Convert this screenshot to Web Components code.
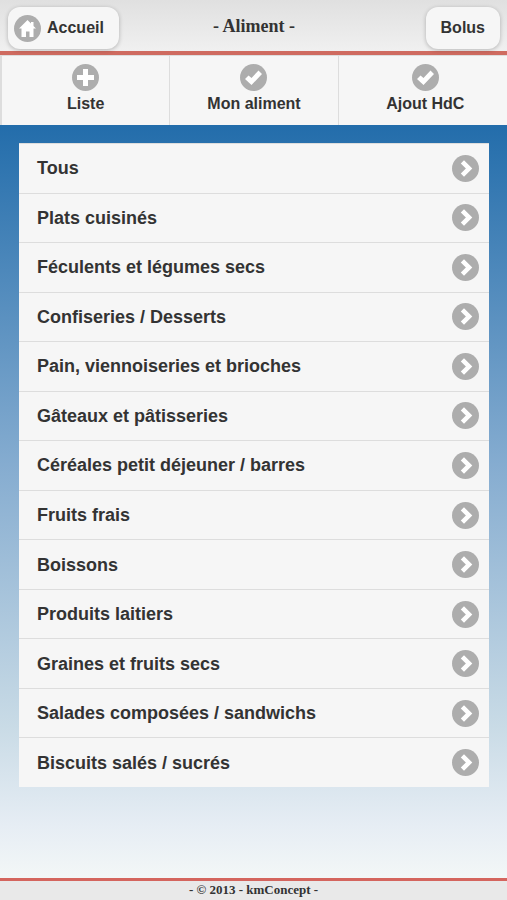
<!DOCTYPE html>
<html lang="fr">
<head>
  <meta charset="utf-8">
  <meta name="viewport" content="width=device-width, initial-scale=1">
  <title>Aliment</title>
  <style>
    body {
      margin: 0;
      color: #333;
      font-family: "Liberation Sans", Arial, sans-serif;
      font-weight: bold;
    }
  </style>
</head>
<body>
  <km-page>
    <km-header slot="header">
      <km-button slot="left" icon="home">Accueil</km-button>
      - Aliment -
      <km-button slot="right">Bolus</km-button>
    </km-header>
    <km-navbar slot="header">
      <km-tab icon="plus">Liste</km-tab>
      <km-tab icon="check">Mon aliment</km-tab>
      <km-tab icon="check">Ajout HdC</km-tab>
    </km-navbar>
    <km-list>
      <km-item>Tous</km-item>
      <km-item>Plats cuisinés</km-item>
      <km-item>Féculents et légumes secs</km-item>
      <km-item>Confiseries / Desserts</km-item>
      <km-item>Pain, viennoiseries et brioches</km-item>
      <km-item>Gâteaux et pâtisseries</km-item>
      <km-item>Céréales petit déjeuner / barres</km-item>
      <km-item>Fruits frais</km-item>
      <km-item>Boissons</km-item>
      <km-item>Produits laitiers</km-item>
      <km-item>Graines et fruits secs</km-item>
      <km-item>Salades composées / sandwichs</km-item>
      <km-item>Biscuits salés / sucrés</km-item>
    </km-list>
    <km-footer slot="footer">- © 2013 - kmConcept -</km-footer>
  </km-page>

  <script>
    const icons = {
      home: '<path d="M13.5 5 L5 13.5 H7.5 V22 H12 V16.5 H15.5 V22 H19.5 V13.5 H22 L19.5 11 V7 H17 V8.5 Z"/>',
      plus: '<path d="M11 5 H16 V11 H22 V16 H16 V22 H11 V16 H5 V11 H11 Z"/>',
      check: '<path d="M5 15 L8.5 11.5 L11.5 14 L18.5 6.5 L22 10 L11.5 21 Z"/>',
      arrow: '<path d="M8.8 8.4 L12 5.2 L20.3 13.5 L12 21.8 L8.8 18.6 L13.9 13.5 Z"/>'
    };

    function createTemplate(html) {
      const template = document.createElement("template");
      template.innerHTML = html;
      return template;
    }

    class BaseElement extends HTMLElement {
      constructor() {
        super();
        this.attachShadow({ mode: "open" });
      }

      connectedCallback() {
        this.shadowRoot.replaceChildren(this.constructor.template.content.cloneNode(true));
        this.render();
      }

      render() {}
    }

    class Icon extends BaseElement {
      static template = createTemplate(`
        <style>
          :host {
            display: block;
            flex: none;
            width: 27px;
            height: 27px;
          }
          svg {
            display: block;
            width: 100%;
            height: 100%;
          }
        </style>
        <svg viewBox="0 0 27 27" aria-hidden="true">
          <circle cx="13.5" cy="13.5" r="13.5" fill="#adadad"/>
          <g fill="#fff"></g>
        </svg>
      `);

      render() {
        this.shadowRoot.querySelector("g").innerHTML = icons[this.getAttribute("name")];
      }
    }

    class Page extends BaseElement {
      static template = createTemplate(`
        <style>
          :host {
            display: flex;
            flex-direction: column;
            min-height: 100vh;
          }
          main {
            display: flex;
            flex: 1;
            padding: 18px 18px 91px 19px;
            background: linear-gradient(#236dab, #85acd0 45%, #c9dbe6 80%, #e6edf4 93%, #f3f7f7);
          }
        </style>
        <slot name="header"></slot>
        <main><slot></slot></main>
        <slot name="footer"></slot>
      `);
    }

    class Header extends BaseElement {
      static template = createTemplate(`
        <style>
          :host {
            display: block;
            border-bottom: 4px solid #cf6b60;
            background: linear-gradient(#e0e0e0, #f0f0f0);
          }
          header {
            display: grid;
            grid-template-columns: 1fr auto 1fr;
            align-items: start;
            padding: 7px 7px 2px 8px;
          }
          h1 {
            margin: 0;
            padding-top: 8px;
            font: bold 18px/22px "Liberation Serif", "Times New Roman", serif;
          }
          slot[name="left"] {
            display: flex;
          }
          slot[name="right"] {
            display: flex;
            justify-content: flex-end;
          }
        </style>
        <header>
          <slot name="left"></slot>
          <h1><slot></slot></h1>
          <slot name="right"></slot>
        </header>
      `);
    }

    class Button extends BaseElement {
      static template = createTemplate(`
        <style>
          :host {
            display: block;
          }
          button {
            display: flex;
            align-items: center;
            gap: 6px;
            height: 42px;
            margin: 0;
            padding: 0 15px;
            border: 0;
            border-radius: 12px;
            background: #f6f6f6;
            box-shadow: 0 1px 4px rgba(0, 0, 0, .25);
            color: inherit;
            font: inherit;
            font-size: 16px;
            line-height: 20px;
          }
          :host([icon]) button {
            padding-left: 6px;
          }
        </style>
        <button type="button"><slot></slot></button>
      `);

      render() {
        if (!this.hasAttribute("icon")) return;
        const icon = document.createElement("km-icon");
        icon.setAttribute("name", this.getAttribute("icon"));
        this.shadowRoot.querySelector("button").prepend(icon);
      }
    }

    class Navbar extends BaseElement {
      static template = createTemplate(`
        <style>
          :host {
            display: block;
            border-top: 1px solid #ddd;
            border-left: 2px solid #ddd;
            background: #f6f6f6;
          }
          nav {
            display: grid;
            grid-template-columns: repeat(3, 1fr);
          }
          ::slotted(:last-child) {
            border-right: 0;
            padding-left: 5px;
          }
        </style>
        <nav><slot></slot></nav>
      `);
    }

    class Tab extends BaseElement {
      static template = createTemplate(`
        <style>
          :host {
            display: block;
            border-right: 1px solid #ddd;
          }
          a {
            display: flex;
            flex-direction: column;
            align-items: center;
            gap: 3px;
            padding: 8px 0 11px;
            color: inherit;
            font-size: 16px;
            line-height: 20px;
            text-decoration: none;
          }
        </style>
        <a href="#"><km-icon></km-icon><slot></slot></a>
      `);

      render() {
        const icon = this.shadowRoot.querySelector("km-icon");
        icon.setAttribute("name", this.getAttribute("icon"));
        if (icon.render) icon.render();
      }
    }

    class List extends BaseElement {
      static template = createTemplate(`
        <style>
          :host {
            display: grid;
            flex: 1;
            grid-auto-rows: 1fr;
            background: #f6f6f6;
          }
          ::slotted(*) {
            border-top: 1px solid #ddd;
          }
        </style>
        <slot></slot>
      `);

      render() {
        this.setAttribute("role", "list");
      }
    }

    class Item extends BaseElement {
      static template = createTemplate(`
        <style>
          :host {
            display: grid;
          }
          a {
            display: flex;
            align-items: center;
            justify-content: space-between;
            padding: 10px 10px 10px 18px;
            color: inherit;
            font-size: 18px;
            line-height: 22px;
            text-decoration: none;
          }
        </style>
        <a href="#"><span><slot></slot></span><km-icon name="arrow"></km-icon></a>
      `);

      render() {
        this.setAttribute("role", "listitem");
      }
    }

    class Footer extends BaseElement {
      static template = createTemplate(`
        <style>
          :host {
            display: block;
            border-top: 3px solid #d4655e;
            background: #e9e9e9;
          }
          footer {
            padding-bottom: 2px;
            font: bold 13px/17px "Liberation Serif", "Times New Roman", serif;
            text-align: center;
          }
        </style>
        <footer><slot></slot></footer>
      `);
    }

    customElements.define("km-icon", Icon);
    customElements.define("km-page", Page);
    customElements.define("km-header", Header);
    customElements.define("km-button", Button);
    customElements.define("km-navbar", Navbar);
    customElements.define("km-tab", Tab);
    customElements.define("km-list", List);
    customElements.define("km-item", Item);
    customElements.define("km-footer", Footer);
  </script>
</body>
</html>
